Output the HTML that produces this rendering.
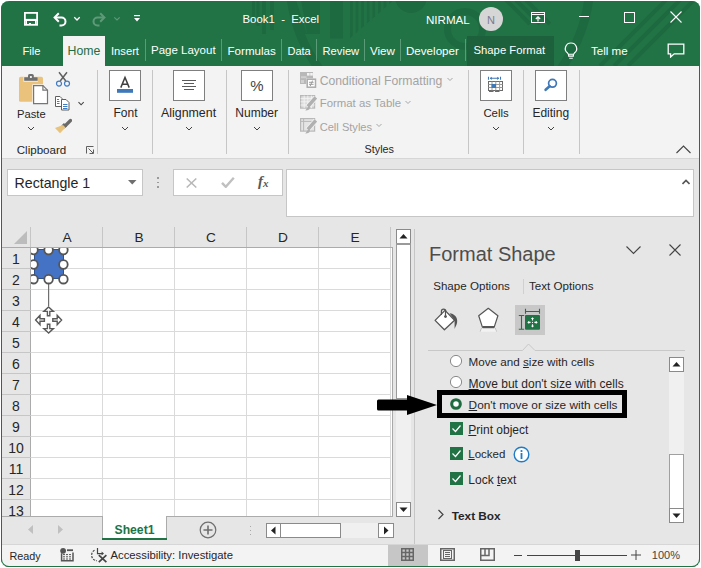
<!DOCTYPE html>
<html><head><meta charset="utf-8"><style>
html,body{margin:0;padding:0;width:701px;height:568px;overflow:hidden;background:#fff;}
body{position:relative;font-family:"Liberation Sans",sans-serif;}
body div{position:absolute;white-space:nowrap;}
body svg{position:absolute;}
</style></head><body>
<div style="left:0px;top:0px;width:701px;height:568px;background:#ffffff;"></div>
<div style="left:1px;top:1px;width:699px;height:566px;border-radius:8px;background:#217346;overflow:hidden"></div>
<svg style="position:absolute;left:0px;top:0px;" width="700" height="66" viewBox="0 0 700 66">
<defs><clipPath id="cp1"><path d="M348 0H394L348 40z"/></clipPath><clipPath id="cpw"><rect x="1" y="1" width="698" height="65" rx="8"/></clipPath></defs>
<g clip-path="url(#cpw)">
<g fill="#1e6a40">
<rect x="252" y="0" width="3" height="20"/>
<rect x="256.5" y="0" width="3" height="26"/>
<rect x="262" y="0" width="4" height="34"/>
<rect x="270" y="0" width="4" height="30"/>
<path d="M289 0h7l11 34h-6z"/>
<path d="M301 0h19v34h-13z"/>
<rect x="330" y="0" width="13" height="38.5"/>
<g clip-path="url(#cp1)"><rect x="350.0" y="0" width="2.8" height="40"/><rect x="355.6" y="0" width="2.8" height="40"/><rect x="361.2" y="0" width="2.8" height="40"/><rect x="366.8" y="0" width="2.8" height="40"/><rect x="372.4" y="0" width="2.8" height="40"/><rect x="378.0" y="0" width="2.8" height="40"/><rect x="383.6" y="0" width="2.8" height="40"/><rect x="389.2" y="0" width="2.8" height="40"/></g>
<circle cx="411" cy="-3" r="16"/>
</g>
<circle cx="465" cy="29" r="17.5" fill="none" stroke="#1e6a40" stroke-width="7"/>
<circle cx="440" cy="-20" r="150" fill="none" stroke="#1e6a40" stroke-width="9"/>
<g stroke="#1e6a40" stroke-width="4">
<line x1="506" y1="0" x2="530" y2="24"/>
<line x1="516" y1="0" x2="540" y2="24"/>
<line x1="526" y1="0" x2="550" y2="24"/>
<line x1="600" y1="66" x2="666" y2="0"/>
<line x1="614" y1="66" x2="680" y2="0"/>
<line x1="628" y1="66" x2="694" y2="0"/>
</g>
</g>
</svg>
<svg style="position:absolute;left:24px;top:12px;" width="14" height="14" viewBox="0 0 14 14"><rect x="0.9" y="0.9" width="12.2" height="11.9" fill="none" stroke="#fff" stroke-width="1.8"/><rect x="0" y="6.9" width="14" height="2.1" fill="#fff"/><rect x="2" y="9" width="1" height="3.7" fill="#fff"/><rect x="11" y="9" width="1" height="3.7" fill="#fff"/><rect x="5" y="11" width="2" height="1.7" fill="#fff"/></svg>
<svg style="position:absolute;left:52px;top:11px;" width="16" height="16" viewBox="0 0 16 16"><path d="M3 6.5h6.5a4 4 0 0 1 0 8h-2" fill="none" stroke="#fff" stroke-width="2"/><path d="M6.8 2.3l-4.2 4.2 4.2 4.2" fill="none" stroke="#fff" stroke-width="2"/></svg>
<svg style="position:absolute;left:73px;top:16px;" width="8" height="6" viewBox="0 0 8 6"><path d="M1.3 1.3l2.7 2.7 2.7-2.7" fill="none" stroke="#fff" stroke-width="1.3"/></svg>
<svg style="position:absolute;left:91px;top:11px;" width="16" height="16" viewBox="0 0 16 16"><path d="M13 6.5h-6.5a4 4 0 0 0 0 8h2" fill="none" stroke="#5e9a78" stroke-width="2"/><path d="M9.2 2.3l4.2 4.2-4.2 4.2" fill="none" stroke="#5e9a78" stroke-width="2"/></svg>
<svg style="position:absolute;left:113px;top:16px;" width="8" height="6" viewBox="0 0 8 6"><path d="M1.3 1.3l2.7 2.7 2.7-2.7" fill="none" stroke="#5e9a78" stroke-width="1.1"/></svg>
<svg style="position:absolute;left:133px;top:14px;" width="8" height="8" viewBox="0 0 8 8"><rect x="1" y="1" width="6" height="1.2" fill="#fff"/><path d="M1 4h6l-3 3.5z" fill="#fff"/></svg>
<div style="top:14.35px;font-size:11.4px;line-height:11.4px;color:#ffffff;left:242.5px;">Book1&nbsp; -&nbsp; Excel</div>
<div style="top:14.18px;font-size:11.6px;line-height:11.6px;color:#ffffff;left:426px;">NIRMAL</div>
<div style="left:479px;top:7px;width:24px;height:24px;border-radius:50%;background:#d6d6d6"></div>
<div style="top:14.69px;font-size:11px;line-height:11px;color:#7a7a92;left:191px;width:600px;text-align:center;">N</div>
<svg style="position:absolute;left:531px;top:12px;" width="14" height="11" viewBox="0 0 14 11"><rect x="0.5" y="0.5" width="13" height="10" fill="none" stroke="#fff" stroke-width="1"/><line x1="0.5" y1="2.5" x2="13.5" y2="2.5" stroke="#fff"/><path d="M7 9.5V5M4.8 7l2.2-2.2L9.2 7" fill="none" stroke="#fff" stroke-width="1.2"/></svg>
<div style="left:579px;top:16px;width:10px;height:1px;background:#ffffff;"></div>
<div style="left:624px;top:12px;width:9px;height:9px;border:1px solid #ffffff;background:transparent;"></div>
<svg style="position:absolute;left:670px;top:11px;" width="12" height="12" viewBox="0 0 12 12"><path d="M0.5 0.5l11 11M11.5 0.5l-11 11" stroke="#fff" stroke-width="1.1"/></svg>
<div style="left:63px;top:36px;width:42px;height:30px;background:#f3f3f3;"></div>
<div style="left:467px;top:36px;width:87px;height:30px;background:#1c613c;"></div>
<div style="top:45.52px;font-size:11.2px;line-height:11.2px;color:#ffffff;left:22.5px;">File</div>
<div style="top:44.59px;font-size:12.3px;line-height:12.3px;color:#1f6e42;left:67.5px;">Home</div>
<div style="top:45.52px;font-size:11.2px;line-height:11.2px;color:#ffffff;left:111px;">Insert</div>
<div style="top:45.27px;font-size:11.5px;line-height:11.5px;color:#ffffff;left:151px;">Page Layout</div>
<div style="top:45.18px;font-size:11.6px;line-height:11.6px;color:#ffffff;left:227.5px;">Formulas</div>
<div style="top:45.69px;font-size:11px;line-height:11px;color:#ffffff;left:287.5px;">Data</div>
<div style="top:45.52px;font-size:11.2px;line-height:11.2px;color:#ffffff;left:322.5px;">Review</div>
<div style="top:45.18px;font-size:11.6px;line-height:11.6px;color:#ffffff;left:370px;">View</div>
<div style="top:45.18px;font-size:11.6px;line-height:11.6px;color:#ffffff;left:406px;">Developer</div>
<div style="top:45.43px;font-size:11.3px;line-height:11.3px;color:#ffffff;left:473.5px;">Shape Format</div>
<div style="top:45.18px;font-size:11.6px;line-height:11.6px;color:#ffffff;left:591px;">Tell me</div>
<div style="left:145px;top:39px;width:1px;height:22px;background:#5a9a76;"></div>
<div style="left:221px;top:39px;width:1px;height:22px;background:#5a9a76;"></div>
<div style="left:281px;top:39px;width:1px;height:22px;background:#5a9a76;"></div>
<div style="left:316px;top:39px;width:1px;height:22px;background:#5a9a76;"></div>
<div style="left:364px;top:39px;width:1px;height:22px;background:#5a9a76;"></div>
<div style="left:400px;top:39px;width:1px;height:22px;background:#5a9a76;"></div>
<div style="left:465px;top:39px;width:1px;height:22px;background:#5a9a76;"></div>
<svg style="position:absolute;left:563px;top:42px;" width="16" height="18" viewBox="0 0 16 18"><path d="M8 1a5.6 5.6 0 0 0-3.4 10.1c.8.7 1.1 1.5 1.1 2.4v.7h4.6v-.7c0-.9.3-1.7 1.1-2.4A5.6 5.6 0 0 0 8 1z" fill="none" stroke="#fff" stroke-width="1.2"/><path d="M5.8 12.2h4.4M6.2 16.2h3.6" stroke="#fff" stroke-width="1.1"/></svg>
<svg style="position:absolute;left:667px;top:43px;" width="18" height="15" viewBox="0 0 18 15"><path d="M1.2 1.2h15.6v9.6H7.2l-3.6 3.2v-3.2H1.2z" fill="none" stroke="#fff" stroke-width="1.3" stroke-linejoin="miter"/></svg>
<div style="left:2px;top:66px;width:697px;height:92px;background:#f3f3f3;"></div>
<div style="left:2px;top:158px;width:697px;height:1px;background:#d6d6d6;"></div>
<div style="left:97px;top:70px;width:1px;height:84px;background:#c6c6c6;"></div>
<div style="left:152px;top:70px;width:1px;height:84px;background:#c6c6c6;"></div>
<div style="left:226px;top:70px;width:1px;height:84px;background:#c6c6c6;"></div>
<div style="left:288px;top:70px;width:1px;height:84px;background:#c6c6c6;"></div>
<div style="left:468px;top:70px;width:1px;height:84px;background:#c6c6c6;"></div>
<div style="left:523px;top:70px;width:1px;height:84px;background:#c6c6c6;"></div>
<div style="left:579px;top:70px;width:1px;height:84px;background:#c6c6c6;"></div>
<svg style="position:absolute;left:12px;top:68px;" width="40" height="40" viewBox="0 0 40 40">
<rect x="7" y="8.8" width="24" height="25" rx="1.6" fill="#eac27b"/>
<rect x="11.5" y="8.7" width="14.5" height="5" fill="#f3f3f3"/>
<rect x="12.2" y="9.2" width="13.5" height="3.6" fill="#6f6f6f"/>
<rect x="16" y="6" width="5.8" height="5" rx="1.6" fill="#6f6f6f"/>
<circle cx="18.9" cy="9" r="1.1" fill="#fff"/>
<path d="M20.3 16.3h11l5.8 5.8v15h-16.8z" fill="#f3f3f3"/>
<path d="M21.6 17.6h9.3l4.6 4.6v13.4h-13.9z" fill="#fff" stroke="#767676" stroke-width="1.2"/>
<path d="M30.9 17.6v4.6h4.6" fill="none" stroke="#767676" stroke-width="1.2"/>
</svg>
<div style="top:109.22px;font-size:11.2px;line-height:11.2px;color:#262626;left:17px;">Paste</div>
<svg style="position:absolute;left:27px;top:126px;" width="8" height="5" viewBox="0 0 8 5"><path d="M1 1l3 3 3-3" fill="none" stroke="#444" stroke-width="1"/></svg>
<svg style="position:absolute;left:55px;top:71px;" width="16" height="16" viewBox="0 0 16 16"><path d="M4 1.3l6.8 8.7M12 1.3L5.2 10" stroke="#5f5f5f" stroke-width="1.5" fill="none"/><circle cx="4" cy="12.6" r="2.5" fill="none" stroke="#3f7cc4" stroke-width="1.2"/><circle cx="12" cy="12.6" r="2.5" fill="none" stroke="#3f7cc4" stroke-width="1.2"/></svg>
<svg style="position:absolute;left:54px;top:95px;" width="17" height="16" viewBox="0 0 17 16"><path d="M1.5 1.5h4.5l2 2v8h-6.5z" fill="#fff" stroke="#5f5f5f" stroke-width="1"/><path d="M7.5 4.5h4.5l3 3v7.5h-7.5z" fill="#fff" stroke="#5f5f5f" stroke-width="1"/><path d="M9 9.5h4.5M9 11.5h4.5M9 13.5h4.5" stroke="#3f7cc4" stroke-width="1"/><path d="M3 4.5h2M3 6.5h2.5M3 8.5h2.5" stroke="#3f7cc4" stroke-width="1"/></svg>
<svg style="position:absolute;left:77px;top:101px;" width="8" height="6" viewBox="0 0 8 6"><path d="M1.5 1.2l2.6 2.6 2.6-2.6" fill="none" stroke="#444" stroke-width="1.1"/></svg>
<svg style="position:absolute;left:54px;top:118px;" width="18" height="16" viewBox="0 0 18 16"><path d="M16.5 2.5l-5.5 5.5" stroke="#6a6a6a" stroke-width="3.2" stroke-linecap="round"/><path d="M11.5 6.5l-2.5 2.5" stroke="#6a6a6a" stroke-width="4.5"/><path d="M9 7l2.5 2.5-5.5 5.8-5-5.3z" fill="#e8c37d"/></svg>
<div style="top:144.18px;font-size:11.6px;line-height:11.6px;color:#262626;left:16.7px;">Clipboard</div>
<svg style="position:absolute;left:86px;top:146px;" width="8" height="8" viewBox="0 0 8 8"><path d="M0.5 7.5V0.5h7M2.5 2.5l4.5 4.5M3.5 7.5h4v-4" fill="none" stroke="#5f5f5f" stroke-width="1"/></svg>
<div style="left:109px;top:70px;width:30px;height:29px;border:1px solid #7f7f7f;background:#ffffff;"></div>
<svg style="position:absolute;left:109px;top:70px;" width="32" height="31" viewBox="0 0 32 31"><path d="M11.8 17.6L16 7.4l4.2 10.2M13.3 14.2h5.4" fill="none" stroke="#3f3f3f" stroke-width="1.5"/><rect x="8" y="19" width="16" height="3.8" fill="#3f78b8"/></svg>
<div style="top:107.04px;font-size:12px;line-height:12px;color:#262626;left:113.5px;">Font</div>
<svg style="position:absolute;left:121.0px;top:126px;" width="8" height="5" viewBox="0 0 8 5"><path d="M1 1l3 3 3-3" fill="none" stroke="#444" stroke-width="1"/></svg>
<div style="left:173px;top:70px;width:30px;height:29px;border:1px solid #7f7f7f;background:#ffffff;"></div>
<svg style="position:absolute;left:173px;top:70px;" width="32" height="31" viewBox="0 0 32 31"><path d="M9 10.5h14M11 13.5h10M9 16.5h14M11 19.5h10" stroke="#5a5a5a" stroke-width="1"/></svg>
<div style="top:106.70px;font-size:12.4px;line-height:12.4px;color:#262626;left:161px;">Alignment</div>
<svg style="position:absolute;left:185.0px;top:126px;" width="8" height="5" viewBox="0 0 8 5"><path d="M1 1l3 3 3-3" fill="none" stroke="#444" stroke-width="1"/></svg>
<div style="left:241px;top:70px;width:30px;height:29px;border:1px solid #7f7f7f;background:#ffffff;"></div>
<svg style="position:absolute;left:241px;top:70px;" width="32" height="31" viewBox="0 0 32 31"><text x="16" y="21" text-anchor="middle" font-family="Liberation Sans" font-size="15" fill="#444">%</text></svg>
<div style="top:107.04px;font-size:12px;line-height:12px;color:#262626;left:235.3px;">Number</div>
<svg style="position:absolute;left:253.0px;top:126px;" width="8" height="5" viewBox="0 0 8 5"><path d="M1 1l3 3 3-3" fill="none" stroke="#444" stroke-width="1"/></svg>
<div style="left:480px;top:70px;width:30px;height:29px;border:1px solid #7f7f7f;background:#ffffff;"></div>
<svg style="position:absolute;left:480px;top:70px;" width="32" height="31" viewBox="0 0 32 31"><path d="M8.5 6.8v3M20.5 6.8v3M10 8.3h9" stroke="#3f78b8" stroke-width="1.1" fill="none"/><path d="M9.8 8.3l2-1.6v3.2zM19.2 8.3l-2-1.6v3.2z" fill="#3f78b8"/><rect x="8.5" y="11.5" width="14" height="9" fill="#fff" stroke="#6a6a6a" stroke-width="1"/><path d="M12 11.5v9M15.8 11.5v9M19.6 11.5v9M8.5 14.5h14M8.5 17.5h14" stroke="#9a9a9a" stroke-width="1"/><rect x="11.5" y="14" width="4.5" height="4" fill="#3f78b8"/><path d="M9 21.5h4.5M15 21.5h4.5" stroke="#6a6a6a" stroke-width="1.1"/></svg>
<div style="top:107.55px;font-size:11.4px;line-height:11.4px;color:#262626;left:483.4px;">Cells</div>
<svg style="position:absolute;left:492.0px;top:126px;" width="8" height="5" viewBox="0 0 8 5"><path d="M1 1l3 3 3-3" fill="none" stroke="#444" stroke-width="1"/></svg>
<div style="left:535px;top:70px;width:30px;height:29px;border:1px solid #7f7f7f;background:#ffffff;"></div>
<svg style="position:absolute;left:535px;top:70px;" width="32" height="31" viewBox="0 0 32 31"><circle cx="17.5" cy="13.3" r="3.9" fill="none" stroke="#3f78b8" stroke-width="1.7"/><path d="M14.6 16.2l-4 3.6" stroke="#3f78b8" stroke-width="2.6" stroke-linecap="round"/></svg>
<div style="top:107.04px;font-size:12px;line-height:12px;color:#262626;left:532.4px;">Editing</div>
<svg style="position:absolute;left:547.0px;top:126px;" width="8" height="5" viewBox="0 0 8 5"><path d="M1 1l3 3 3-3" fill="none" stroke="#444" stroke-width="1"/></svg>
<svg style="position:absolute;left:300px;top:72px;" width="17" height="17" viewBox="0 0 17 17"><rect x="0" y="0" width="13" height="12" fill="#b8b8b8"/><rect x="7" y="1" width="2.6" height="2.6" fill="#f3f3f3"/><rect x="10.2" y="1" width="2.6" height="2.6" fill="#f3f3f3"/><rect x="1" y="4.2" width="5.5" height="2" fill="#d0d0d0"/><rect x="1" y="8" width="3" height="3" fill="#d0d0d0"/><rect x="6.2" y="6.2" width="10.3" height="10" fill="#f3f3f3"/><rect x="7.2" y="7.2" width="8.3" height="8" fill="#fff" stroke="#ababab" stroke-width="1.5"/><path d="M9 10.3h4.6M9 12.3h4.6M12.6 8.6l-2.4 5.4" stroke="#9a9a9a" stroke-width="1"/></svg>
<div style="top:74.67px;font-size:12.2px;line-height:12.2px;color:#a3a3a3;left:319.7px;">Conditional Formatting</div>
<svg style="position:absolute;left:447px;top:77px;" width="6" height="5" viewBox="0 0 6 5"><path d="M0.5 1l2.5 2.5 2.5-2.5" fill="none" stroke="#a6a6a6" stroke-width="1"/></svg>
<svg style="position:absolute;left:300px;top:95px;" width="17" height="17" viewBox="0 0 17 17"><rect x="0.6" y="0.6" width="14" height="12.5" fill="#dcdcdc" stroke="#b8b8b8" stroke-width="1.2"/><path d="M0.6 3.6h14M0.6 6.8h14M0.6 10h14M4.2 0.6v12.5M7.8 0.6v12.5M11.4 0.6v12.5" stroke="#f3f3f3" stroke-width="0.9"/><path d="M15.8 2.5L7.5 11.8" stroke="#f3f3f3" stroke-width="5"/><path d="M15.8 2.5L7.8 11.5" stroke="#b0b0b0" stroke-width="3.4"/><path d="M8.5 11l-3.2 4.5c2.2.2 4.5-.6 4.8-3z" fill="#b0b0b0"/></svg>
<div style="top:98.35px;font-size:11.4px;line-height:11.4px;color:#a3a3a3;left:319.7px;">Format as Table</div>
<svg style="position:absolute;left:405px;top:100px;" width="6" height="5" viewBox="0 0 6 5"><path d="M0.5 1l2.5 2.5 2.5-2.5" fill="none" stroke="#a6a6a6" stroke-width="1"/></svg>
<svg style="position:absolute;left:300px;top:118px;" width="17" height="17" viewBox="0 0 17 17"><rect x="0.6" y="0.6" width="14" height="12.5" fill="#e4e4e4" stroke="#b8b8b8" stroke-width="1.2"/><path d="M0.6 3.4h14M3.6 0.6v12.5" stroke="#b8b8b8" stroke-width="1"/><path d="M15.8 2.5L7.5 11.8" stroke="#f3f3f3" stroke-width="5"/><path d="M15.8 2.5L7.8 11.5" stroke="#b0b0b0" stroke-width="3.4"/><path d="M8.5 11l-3.2 4.5c2.2.2 4.5-.6 4.8-3z" fill="#b0b0b0"/></svg>
<div style="top:121.60px;font-size:11.1px;line-height:11.1px;color:#a3a3a3;left:319.7px;">Cell Styles</div>
<svg style="position:absolute;left:376px;top:123px;" width="6" height="5" viewBox="0 0 6 5"><path d="M0.5 1l2.5 2.5 2.5-2.5" fill="none" stroke="#a6a6a6" stroke-width="1"/></svg>
<div style="top:144.46px;font-size:10.8px;line-height:10.8px;color:#262626;left:364.6px;">Styles</div>
<svg style="position:absolute;left:676px;top:145px;" width="15" height="9" viewBox="0 0 15 9"><path d="M0.5 8l7-7 7 7" fill="none" stroke="#444" stroke-width="1.1"/></svg>
<div style="left:2px;top:159px;width:697px;height:68px;background:#e6e6e6;"></div>
<div style="left:7px;top:169px;width:134px;height:25px;border:1px solid #c6c6c6;background:#ffffff;"></div>
<div style="top:175.98px;font-size:14.2px;line-height:14.2px;color:#262626;left:14.5px;">Rectangle 1</div>
<svg style="position:absolute;left:128px;top:180px;" width="9" height="5" viewBox="0 0 9 5"><path d="M0 0h8.5l-4.25 4.5z" fill="#6f6f6f"/></svg>
<div style="left:157px;top:177px;width:1.5px;height:1.5px;background:#9a9a9a;"></div>
<div style="left:157px;top:181.5px;width:1.5px;height:1.5px;background:#9a9a9a;"></div>
<div style="left:157px;top:186px;width:1.5px;height:1.5px;background:#9a9a9a;"></div>
<div style="left:173px;top:169px;width:108px;height:25px;border:1px solid #c6c6c6;background:#ffffff;"></div>
<svg style="position:absolute;left:186px;top:178px;" width="11" height="10" viewBox="0 0 11 10"><path d="M0.7 0.5l9.6 9M10.3 0.5l-9.6 9" stroke="#b8b8b8" stroke-width="1.5"/></svg>
<svg style="position:absolute;left:221px;top:177px;" width="14" height="11" viewBox="0 0 14 11"><path d="M1 5.8l3.8 4 8-9" fill="none" stroke="#c0c0c0" stroke-width="2.4"/></svg>
<div style="left:258px;top:173px;font-family:'Liberation Serif',serif;font-style:italic;font-weight:700;font-size:15px;line-height:16px;color:#595959">f<span style="font-size:11px;position:relative;top:1px">x</span></div>
<div style="left:286px;top:169px;width:406px;height:46px;border:1px solid #c6c6c6;background:#ffffff;"></div>
<svg style="position:absolute;left:682px;top:179px;" width="8" height="6" viewBox="0 0 8 6"><path d="M0.5 5l3.5-3.5 3.5 3.5" fill="none" stroke="#555" stroke-width="1.6"/></svg>
<div style="left:2px;top:227px;width:413px;height:290px;background:#ffffff;"></div>
<div style="left:2px;top:227px;width:391px;height:21px;background:#e6e6e6;"></div>
<div style="left:2px;top:248px;width:29px;height:269px;background:#e6e6e6;"></div>
<svg style="position:absolute;left:14px;top:231px;" width="14" height="13" viewBox="0 0 14 13"><path d="M13 0v13H0z" fill="#bcbcbc"/></svg>
<div style="left:30px;top:227px;width:1px;height:21px;background:#c6c6c6;"></div>
<div style="left:102px;top:227px;width:1px;height:21px;background:#c6c6c6;"></div>
<div style="left:174px;top:227px;width:1px;height:21px;background:#c6c6c6;"></div>
<div style="left:246px;top:227px;width:1px;height:21px;background:#c6c6c6;"></div>
<div style="left:318px;top:227px;width:1px;height:21px;background:#c6c6c6;"></div>
<div style="left:390px;top:227px;width:1px;height:21px;background:#c6c6c6;"></div>
<div style="left:2px;top:247px;width:391px;height:1px;background:#ababab;"></div>
<div style="left:30px;top:248px;width:1px;height:269px;background:#ababab;"></div>
<div style="top:231.40px;font-size:13.7px;line-height:13.7px;color:#262626;left:-233px;width:600px;text-align:center;">A</div>
<div style="top:231.40px;font-size:13.7px;line-height:13.7px;color:#262626;left:-161px;width:600px;text-align:center;">B</div>
<div style="top:231.40px;font-size:13.7px;line-height:13.7px;color:#262626;left:-89px;width:600px;text-align:center;">C</div>
<div style="top:231.40px;font-size:13.7px;line-height:13.7px;color:#262626;left:-17px;width:600px;text-align:center;">D</div>
<div style="top:231.40px;font-size:13.7px;line-height:13.7px;color:#262626;left:55px;width:600px;text-align:center;">E</div>
<div style="left:31px;top:268px;width:360px;height:1px;background:#dadada;"></div>
<div style="left:2px;top:268px;width:29px;height:1px;background:#c6c6c6;"></div>
<div style="left:31px;top:289px;width:360px;height:1px;background:#dadada;"></div>
<div style="left:2px;top:289px;width:29px;height:1px;background:#c6c6c6;"></div>
<div style="left:31px;top:310px;width:360px;height:1px;background:#dadada;"></div>
<div style="left:2px;top:310px;width:29px;height:1px;background:#c6c6c6;"></div>
<div style="left:31px;top:331px;width:360px;height:1px;background:#dadada;"></div>
<div style="left:2px;top:331px;width:29px;height:1px;background:#c6c6c6;"></div>
<div style="left:31px;top:352px;width:360px;height:1px;background:#dadada;"></div>
<div style="left:2px;top:352px;width:29px;height:1px;background:#c6c6c6;"></div>
<div style="left:31px;top:373px;width:360px;height:1px;background:#dadada;"></div>
<div style="left:2px;top:373px;width:29px;height:1px;background:#c6c6c6;"></div>
<div style="left:31px;top:394px;width:360px;height:1px;background:#dadada;"></div>
<div style="left:2px;top:394px;width:29px;height:1px;background:#c6c6c6;"></div>
<div style="left:31px;top:415px;width:360px;height:1px;background:#dadada;"></div>
<div style="left:2px;top:415px;width:29px;height:1px;background:#c6c6c6;"></div>
<div style="left:31px;top:436px;width:360px;height:1px;background:#dadada;"></div>
<div style="left:2px;top:436px;width:29px;height:1px;background:#c6c6c6;"></div>
<div style="left:31px;top:457px;width:360px;height:1px;background:#dadada;"></div>
<div style="left:2px;top:457px;width:29px;height:1px;background:#c6c6c6;"></div>
<div style="left:31px;top:478px;width:360px;height:1px;background:#dadada;"></div>
<div style="left:2px;top:478px;width:29px;height:1px;background:#c6c6c6;"></div>
<div style="left:31px;top:499px;width:360px;height:1px;background:#dadada;"></div>
<div style="left:2px;top:499px;width:29px;height:1px;background:#c6c6c6;"></div>
<div style="left:31px;top:520px;width:360px;height:1px;background:#dadada;"></div>
<div style="left:2px;top:520px;width:29px;height:1px;background:#c6c6c6;"></div>
<div style="left:102px;top:248px;width:1px;height:269px;background:#dadada;"></div>
<div style="left:174px;top:248px;width:1px;height:269px;background:#dadada;"></div>
<div style="left:246px;top:248px;width:1px;height:269px;background:#dadada;"></div>
<div style="left:318px;top:248px;width:1px;height:269px;background:#dadada;"></div>
<div style="left:390px;top:248px;width:1px;height:269px;background:#dadada;"></div>
<div style="left:392px;top:247px;width:1px;height:270px;background:#a8a8a8;"></div>
<div style="left:391px;top:248px;width:1px;height:269px;background:#ffffff;"></div>
<div style="top:252.15px;font-size:14px;line-height:14px;color:#262626;left:-284px;width:600px;text-align:center;">1</div>
<div style="top:273.15px;font-size:14px;line-height:14px;color:#262626;left:-284px;width:600px;text-align:center;">2</div>
<div style="top:294.15px;font-size:14px;line-height:14px;color:#262626;left:-284px;width:600px;text-align:center;">3</div>
<div style="top:315.15px;font-size:14px;line-height:14px;color:#262626;left:-284px;width:600px;text-align:center;">4</div>
<div style="top:336.15px;font-size:14px;line-height:14px;color:#262626;left:-284px;width:600px;text-align:center;">5</div>
<div style="top:357.15px;font-size:14px;line-height:14px;color:#262626;left:-284px;width:600px;text-align:center;">6</div>
<div style="top:378.15px;font-size:14px;line-height:14px;color:#262626;left:-284px;width:600px;text-align:center;">7</div>
<div style="top:399.15px;font-size:14px;line-height:14px;color:#262626;left:-284px;width:600px;text-align:center;">8</div>
<div style="top:420.15px;font-size:14px;line-height:14px;color:#262626;left:-284px;width:600px;text-align:center;">9</div>
<div style="top:441.15px;font-size:14px;line-height:14px;color:#262626;left:-284px;width:600px;text-align:center;">10</div>
<div style="top:462.15px;font-size:14px;line-height:14px;color:#262626;left:-284px;width:600px;text-align:center;">11</div>
<div style="top:483.15px;font-size:14px;line-height:14px;color:#262626;left:-284px;width:600px;text-align:center;">12</div>
<div style="top:504.15px;font-size:14px;line-height:14px;color:#262626;left:-284px;width:600px;text-align:center;">13</div>
<div style="left:393px;top:227px;width:22px;height:290px;background:#e6e6e6;"></div>
<div style="left:396px;top:243px;width:15px;height:260px;background:#f0f0f0;"></div>
<div style="left:396px;top:229px;width:13px;height:13px;border:1px solid #8a8a8a;background:#ffffff;"></div>
<svg style="position:absolute;left:396px;top:229px;" width="15" height="15" viewBox="0 0 15 15"><path d="M3.5 9.5h8l-4-4.5z" fill="#222"/></svg>
<div style="left:396px;top:243px;width:13px;height:153px;border:1px solid #9a9a9a;border-top:2px solid #9a9a9a;background:#fff"></div>
<div style="left:396px;top:502px;width:13px;height:13px;border:1px solid #8a8a8a;background:#ffffff;"></div>
<svg style="position:absolute;left:396px;top:502px;" width="15" height="15" viewBox="0 0 15 15"><path d="M3.5 5.5h8l-4 4.5z" fill="#222"/></svg>
<div style="left:414px;top:229px;width:1px;height:315px;background:#c6c6c6;"></div>
<div style="left:31px;top:248px;width:359px;height:268px;overflow:hidden"><div style="left:3px;top:1px;width:30px;height:30px;background:#4472c4;box-shadow:inset 0 0 0 1px #2f528f"></div><svg style="position:absolute;left:-3px;top:-4px" width="42" height="100" viewBox="0 0 42 100"><line x1="20.6" y1="40" x2="20.6" y2="62" stroke="#6f6f6f" stroke-width="1.2"/><g fill="#fff" stroke="#555" stroke-width="1.8"><circle cx="5.5" cy="6" r="4.3"/><circle cx="20.6" cy="6" r="4.3"/><circle cx="35.4" cy="6" r="4.3"/><circle cx="5.5" cy="20.5" r="4.3"/><circle cx="35.4" cy="20.5" r="4.3"/><circle cx="5.5" cy="35.2" r="4.3"/><circle cx="20.6" cy="35.2" r="4.3"/><circle cx="35.4" cy="35.2" r="4.3"/></g><g fill="#fff" stroke="#5a5a5a" stroke-width="1.4" stroke-linejoin="miter"><path d="M20.6 63.0 L25.4 67.4 L21.8 67.4 L21.8 71.8 L19.4 71.8 L19.4 67.4 L15.8 67.4Z"/><path d="M20.6 89.0 L15.8 84.6 L19.4 84.6 L19.4 80.2 L21.8 80.2 L21.8 84.6 L25.4 84.6Z"/><path d="M7.6 76.0 L12.0 71.2 L12.0 74.8 L16.4 74.8 L16.4 77.2 L12.0 77.2 L12.0 80.8Z"/><path d="M33.6 76.0 L29.2 80.8 L29.2 77.2 L24.8 77.2 L24.8 74.8 L29.2 74.8 L29.2 71.2Z"/></g></svg></div>
<div style="left:2px;top:517px;width:413px;height:27px;background:#e6e6e6;"></div>
<div style="left:414px;top:517px;width:1px;height:27px;background:#c6c6c6;"></div>
<div style="left:2px;top:516px;width:391px;height:1px;background:#ababab;"></div>
<svg style="position:absolute;left:28px;top:525px;" width="6" height="9" viewBox="0 0 6 9"><path d="M5 0v9L0 4.5z" fill="#c0c0c0"/></svg>
<svg style="position:absolute;left:58px;top:525px;" width="6" height="9" viewBox="0 0 6 9"><path d="M0 0v9l5-4.5z" fill="#c0c0c0"/></svg>
<div style="left:102px;top:516px;width:65px;height:22px;background:#fff;border-left:1px solid #ababab;border-right:1px solid #ababab;box-sizing:border-box"></div>
<div style="left:102px;top:538px;width:65px;height:2px;background:#217346;"></div>
<div style="top:523.67px;font-size:12.2px;line-height:12.2px;color:#217346;font-weight:700;left:-165.5px;width:600px;text-align:center;">Sheet1</div>
<svg style="position:absolute;left:199px;top:521px;" width="18" height="18" viewBox="0 0 18 18"><circle cx="9" cy="9" r="7.8" fill="none" stroke="#6f6f6f" stroke-width="1.2"/><path d="M9 4.5v9M4.5 9h9" stroke="#6f6f6f" stroke-width="1.6"/></svg>
<div style="left:249.5px;top:525.5px;width:1.5px;height:1.5px;background:#a8a8a8;"></div>
<div style="left:249.5px;top:529.5px;width:1.5px;height:1.5px;background:#a8a8a8;"></div>
<div style="left:249.5px;top:533.5px;width:1.5px;height:1.5px;background:#a8a8a8;"></div>
<div style="left:266px;top:523px;width:13px;height:13px;border:1px solid #8a8a8a;background:#ffffff;"></div>
<svg style="position:absolute;left:266px;top:523px;" width="15" height="15" viewBox="0 0 15 15"><path d="M9.5 3.5v8l-4.5-4z" fill="#222"/></svg>
<div style="left:280px;top:523px;width:59px;height:13px;border:1px solid #8a8a8a;background:#ffffff;"></div>
<div style="left:341px;top:523px;width:37px;height:15px;background:#f0f0f0;"></div>
<div style="left:378px;top:523px;width:14px;height:13px;border:1px solid #8a8a8a;background:#ffffff;"></div>
<svg style="position:absolute;left:378px;top:523px;" width="16" height="15" viewBox="0 0 16 15"><path d="M6 3.5v8l4.5-4z" fill="#222"/></svg>
<div style="left:415px;top:227px;width:284px;height:317px;background:#e6e6e6;"></div>
<div style="top:243.87px;font-size:20px;line-height:20px;color:#4d4d4d;left:429px;">Format Shape</div>
<svg style="position:absolute;left:626px;top:246px;" width="15" height="9" viewBox="0 0 15 9"><path d="M0.5 0.5l7 7 7-7" fill="none" stroke="#444" stroke-width="1.1"/></svg>
<svg style="position:absolute;left:669px;top:244px;" width="12" height="12" viewBox="0 0 12 12"><path d="M0.5 0.5l11 11M11.5 0.5l-11 11" stroke="#444" stroke-width="1.1"/></svg>
<div style="top:280.38px;font-size:11.6px;line-height:11.6px;color:#262626;left:433.2px;">Shape Options</div>
<div style="left:523px;top:279px;width:1px;height:15px;background:#d0d0d0;"></div>
<div style="top:280.38px;font-size:11.6px;line-height:11.6px;color:#262626;left:529px;">Text Options</div>
<svg style="position:absolute;left:434px;top:307px;" width="26" height="25" viewBox="0 0 26 25"><path d="M1.1 13.4L11 3.4l9.6 9.8-10.2 9.6z" fill="#fff" stroke="#555" stroke-width="1.3" stroke-linejoin="round"/><path d="M7.4 8V4.3a2.2 2.2 0 0 1 4.4 0" fill="none" stroke="#555" stroke-width="1.2"/><path d="M11.5 3.5v6" stroke="#555" stroke-width="1.2"/><circle cx="11.5" cy="9.6" r="1.4" fill="#555"/><path d="M15.5 6.2c4.5.4 8.5 3.8 7.6 9.3-.4 2.3-1.6 4-2.5 6.4v-8.7z" fill="#555"/></svg>
<svg style="position:absolute;left:477px;top:307px;" width="23" height="26" viewBox="0 0 23 26"><path d="M4.5 21l-1.2 3.5M18.2 21l1.2 3.5" stroke="#bdbdbd" stroke-width="1"/><path d="M5 21.2h12.8l1.3 3.6h-15.4z" fill="#f2f2f2"/><path d="M11.3 1.3l9.6 7.4-3.7 11.4h-11.8l-3.7-11.4z" fill="#fff" stroke="#555" stroke-width="1.2" stroke-linejoin="round"/><path d="M5.6 20.1h11.6" stroke="#555" stroke-width="2.2"/></svg>
<div style="left:515px;top:305px;width:30px;height:30px;background:#c8c8c8;"></div>
<svg style="position:absolute;left:515px;top:305px;" width="30" height="30" viewBox="0 0 30 30"><path d="M3.8 10.5h5.4M6.5 10.5v13.8M3.8 24.3h5.4" stroke="#217346" stroke-width="1.1" fill="none"/><path d="M10.5 6.5h14M10.5 3.8v5M24.5 3.8v5" stroke="#217346" stroke-width="1.1" fill="none"/><rect x="10" y="10" width="15" height="14.8" rx="1" fill="#217346"/><path d="M17.5 13v2.6M17.5 19.2v2.6M13 17.4h2.6M19.4 17.4h2.6" stroke="#fff" stroke-width="1.1"/><path d="M17.5 12.2l-1.6 1.9h3.2zM17.5 22.6l-1.6-1.9h3.2zM12.3 17.4l1.9-1.6v3.2zM22.7 17.4l-1.9-1.6v3.2z" fill="#fff"/><rect x="17" y="16.9" width="1" height="1" fill="#fff"/></svg>
<svg style="position:absolute;left:428px;top:340px;" width="257" height="12" viewBox="0 0 257 12"><path d="M0 10.5h94.5l6-6.5 6.5 6.5h150" fill="none" stroke="#c8c8c8" stroke-width="1"/></svg>
<svg style="position:absolute;left:449px;top:353.5px;" width="14" height="14" viewBox="0 0 14 14"><circle cx="7" cy="7" r="5.6" fill="#fff" stroke="#8a8a8a" stroke-width="1"/></svg>
<svg style="position:absolute;left:449px;top:375px;" width="14" height="14" viewBox="0 0 14 14"><circle cx="7" cy="7" r="5.6" fill="#fff" stroke="#8a8a8a" stroke-width="1"/></svg>
<svg style="position:absolute;left:449px;top:397.3px;" width="14" height="14" viewBox="0 0 14 14"><circle cx="7" cy="7" r="4.3" fill="#fff" stroke="#1d6b3f" stroke-width="3.1"/></svg>
<div style="top:355.92px;font-size:11.67px;line-height:11.67px;color:#262626;left:468.6px;">Move and <u style="text-underline-offset:1px">s</u>ize with cells</div>
<div style="top:377.84px;font-size:12px;line-height:12px;color:#262626;left:468.6px;"><u style="text-underline-offset:1px">M</u>ove but don't size with cells</div>
<div style="top:399.98px;font-size:11.84px;line-height:11.84px;color:#262626;left:468.6px;"><u style="text-underline-offset:1px">D</u>on't move or size with cells</div>
<div style="left:437px;top:390px;width:190px;height:28px;border:5px solid #000;box-sizing:border-box"></div>
<svg style="position:absolute;left:376px;top:394px;" width="62" height="22" viewBox="0 0 62 22"><path d="M2.5 5.5h28.5v-4.5l30 10-30 10v-4.5h-28.5a1.5 1.5 0 0 1-1.5-1.5v-8a1.5 1.5 0 0 1 1.5-1.5z" fill="#000"/></svg>
<div style="left:450px;top:422px;width:13px;height:13px;background:#217346;"></div>
<svg style="position:absolute;left:450px;top:422px;" width="13" height="13" viewBox="0 0 13 13"><path d="M2.5 6.5l3 3 5-6" fill="none" stroke="#fff" stroke-width="1.2"/></svg>
<div style="left:450px;top:447px;width:13px;height:13px;background:#217346;"></div>
<svg style="position:absolute;left:450px;top:447px;" width="13" height="13" viewBox="0 0 13 13"><path d="M2.5 6.5l3 3 5-6" fill="none" stroke="#fff" stroke-width="1.2"/></svg>
<div style="left:450px;top:472px;width:13px;height:13px;background:#217346;"></div>
<svg style="position:absolute;left:450px;top:472px;" width="13" height="13" viewBox="0 0 13 13"><path d="M2.5 6.5l3 3 5-6" fill="none" stroke="#fff" stroke-width="1.2"/></svg>
<div style="top:424.04px;font-size:12px;line-height:12px;color:#262626;left:468.3px;"><u style="text-underline-offset:1px">P</u>rint object</div>
<div style="top:449.47px;font-size:11.5px;line-height:11.5px;color:#262626;left:468.3px;"><u style="text-underline-offset:1px">L</u>ocked</div>
<div style="top:474.04px;font-size:12px;line-height:12px;color:#262626;left:468.3px;">Lock <u style="text-underline-offset:1px">t</u>ext</div>
<svg style="position:absolute;left:513px;top:446px;" width="17" height="17" viewBox="0 0 17 17"><circle cx="8.5" cy="8.5" r="7.3" fill="#fff" stroke="#1e7bc6" stroke-width="1.4"/><circle cx="8.5" cy="5" r="1.1" fill="#1e7bc6"/><rect x="7.6" y="7" width="1.8" height="6" fill="#1e7bc6"/></svg>
<svg style="position:absolute;left:437px;top:509px;" width="8" height="11" viewBox="0 0 8 11"><path d="M1.5 1l4.5 4.5-4.5 4.5" fill="none" stroke="#444" stroke-width="1.2"/></svg>
<div style="top:510.51px;font-size:11.8px;line-height:11.8px;color:#262626;font-weight:700;left:451.7px;">Text Box</div>
<div style="left:669px;top:357px;width:15px;height:166px;background:#f0f0f0;"></div>
<div style="left:669px;top:357px;width:13px;height:13px;border:1px solid #8a8a8a;background:#ffffff;"></div>
<svg style="position:absolute;left:669px;top:357px;" width="15" height="15" viewBox="0 0 15 15"><path d="M3.5 9.5h8l-4-4.5z" fill="#222"/></svg>
<div style="left:669px;top:454px;width:13px;height:53px;border:1px solid #a0a0a0;background:#ffffff;"></div>
<div style="left:669px;top:508px;width:13px;height:13px;border:1px solid #8a8a8a;background:#ffffff;"></div>
<svg style="position:absolute;left:669px;top:508px;" width="15" height="15" viewBox="0 0 15 15"><path d="M3.5 5.5h8l-4 4.5z" fill="#222"/></svg>
<div style="left:2px;top:544px;width:697px;height:22px;background:#f3f3f3;"></div>
<div style="left:2px;top:544px;width:697px;height:1px;background:#d6d6d6;"></div>
<div style="top:550.76px;font-size:10.8px;line-height:10.8px;color:#262626;left:9.4px;">Ready</div>
<svg style="position:absolute;left:58px;top:546px;" width="52" height="18" viewBox="0 0 52 18"><circle cx="5.1" cy="4.8" r="2.9" fill="#555"/><rect x="9" y="3.3" width="6" height="1.8" fill="#555"/><path d="M3.6 7.2v7.5h11.4V6.5" fill="none" stroke="#555" stroke-width="1.5"/><path d="M5 8.6h2M8 8.6h2M11 8.6h2M5 10.8h2M8 10.8h2M11 10.8h2M5 13h2M8 13h2M11 13h2" stroke="#555" stroke-width="1"/><path d="M36.5 4.2A5.6 5.6 0 0 0 39 14.7" fill="none" stroke="#444" stroke-width="1.2" stroke-dasharray="2.2 1.2"/><path d="M39.5 2v5.6h4.5" fill="none" stroke="#444" stroke-width="1.2"/><path d="M46 7.6l-2.4-2v4z" fill="#444"/><path d="M40.8 9.2l7.6 7M48.4 9.2l-7.6 7" stroke="#444" stroke-width="1.7"/></svg>
<div style="top:550.23px;font-size:11.3px;line-height:11.3px;color:#262626;left:110.5px;">Accessibility: Investigate</div>
<div style="left:388px;top:545px;width:40px;height:21px;background:#c6c6c6;"></div>
<svg style="position:absolute;left:401px;top:548px;" width="13" height="13" viewBox="0 0 13 13"><path d="M0.75 0.75h11.5v11.5h-11.5zM0.75 4.6h11.5M0.75 8.4h11.5M4.6 0.75v11.5M8.4 0.75v11.5" fill="none" stroke="#666" stroke-width="1.5"/></svg>
<svg style="position:absolute;left:440px;top:548px;" width="15" height="13" viewBox="0 0 15 13"><rect x="0.75" y="0.75" width="13.5" height="11.5" fill="none" stroke="#666" stroke-width="1.5"/><rect x="3.5" y="2.5" width="8" height="8" fill="none" stroke="#666" stroke-width="1"/><path d="M5 4.5h5M5 6.5h5M5 8.5h5" stroke="#666" stroke-width="1"/></svg>
<svg style="position:absolute;left:480px;top:548px;" width="15" height="13" viewBox="0 0 15 13"><rect x="0.75" y="0.75" width="13.5" height="11.5" fill="none" stroke="#666" stroke-width="1.5"/><path d="M5 0.75v6.75M9 0.75v6.75h-8.25" fill="none" stroke="#666" stroke-width="1.5"/></svg>
<div style="left:514px;top:555px;width:8px;height:1px;background:#444;"></div>
<div style="left:527px;top:555px;width:100px;height:1px;background:#444;"></div>
<div style="left:575px;top:550px;width:5px;height:11px;background:#444;"></div>
<svg style="position:absolute;left:631px;top:550px;" width="10" height="10" viewBox="0 0 10 10"><path d="M5 0v10M0 5h10" stroke="#444" stroke-width="1"/></svg>
<div style="top:549.69px;font-size:11px;line-height:11px;color:#444;left:80px;width:600px;text-align:right;">100%</div>
<div style="left:1px;top:1px;width:699px;height:566px;border-radius:8px;border:1px solid #217346;border-top:0;box-sizing:border-box;pointer-events:none"></div>
</body></html>
